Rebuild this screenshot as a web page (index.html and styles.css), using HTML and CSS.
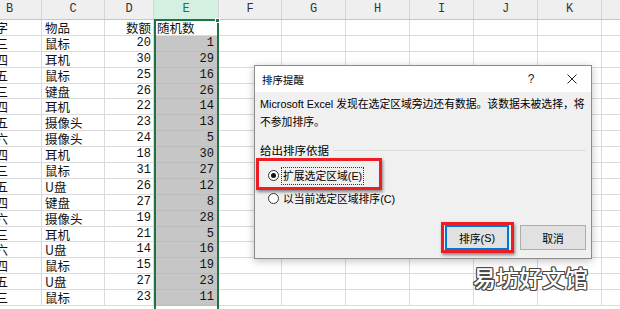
FILE: index.html
```html
<!DOCTYPE html>
<html lang="zh">
<head>
    <meta charset="UTF-8">
    <title>排序提醒</title>
    <link rel="stylesheet" href="styles.css">
</head>
<body>
<div class="page">
    <div class="sheet">
        <div class="hdr">
            <div class="h b">B</div>
            <div class="h cc">C</div>
            <div class="h d">D</div>
            <div class="h e on">E</div>
            <div class="h f">F</div>
            <div class="h g">G</div>
            <div class="h g">H</div>
            <div class="h g">I</div>
            <div class="h g">J</div>
            <div class="h g">K</div>
            <div class="h g"></div>
        </div>
        <div class="row"><div class="c b">名字</div><div class="c cc">物品</div><div class="c d">数额</div><div class="c e top">随机数</div><div class="c f"></div><div class="rest"></div></div>
        <div class="row"><div class="c b">张三</div><div class="c cc">鼠标</div><div class="c d num">20</div><div class="c e num">1</div><div class="c f"></div><div class="rest"></div></div>
        <div class="row"><div class="c b">李四</div><div class="c cc">耳机</div><div class="c d num">30</div><div class="c e num">29</div><div class="c f"></div><div class="rest"></div></div>
        <div class="row"><div class="c b">王五</div><div class="c cc">鼠标</div><div class="c d num">25</div><div class="c e num">16</div><div class="c f"></div><div class="rest"></div></div>
        <div class="row"><div class="c b">张三</div><div class="c cc">键盘</div><div class="c d num">26</div><div class="c e num">26</div><div class="c f"></div><div class="rest"></div></div>
        <div class="row"><div class="c b">李四</div><div class="c cc">耳机</div><div class="c d num">22</div><div class="c e num">14</div><div class="c f"></div><div class="rest"></div></div>
        <div class="row"><div class="c b">王五</div><div class="c cc">摄像头</div><div class="c d num">23</div><div class="c e num">13</div><div class="c f"></div><div class="rest"></div></div>
        <div class="row"><div class="c b">赵六</div><div class="c cc">摄像头</div><div class="c d num">24</div><div class="c e num">5</div><div class="c f"></div><div class="rest"></div></div>
        <div class="row"><div class="c b">李四</div><div class="c cc">耳机</div><div class="c d num">18</div><div class="c e num">30</div><div class="c f"></div><div class="rest"></div></div>
        <div class="row"><div class="c b">张三</div><div class="c cc">鼠标</div><div class="c d num">31</div><div class="c e num">27</div><div class="c f"></div><div class="rest"></div></div>
        <div class="row"><div class="c b">王五</div><div class="c cc">U盘</div><div class="c d num">26</div><div class="c e num">12</div><div class="c f"></div><div class="rest"></div></div>
        <div class="row"><div class="c b">李四</div><div class="c cc">键盘</div><div class="c d num">27</div><div class="c e num">8</div><div class="c f"></div><div class="rest"></div></div>
        <div class="row"><div class="c b">赵六</div><div class="c cc">摄像头</div><div class="c d num">19</div><div class="c e num">28</div><div class="c f"></div><div class="rest"></div></div>
        <div class="row"><div class="c b">张三</div><div class="c cc">耳机</div><div class="c d num">21</div><div class="c e num">5</div><div class="c f"></div><div class="rest"></div></div>
        <div class="row"><div class="c b">赵六</div><div class="c cc">U盘</div><div class="c d num">14</div><div class="c e num">16</div><div class="c f"></div><div class="rest"></div></div>
        <div class="row"><div class="c b">李四</div><div class="c cc">鼠标</div><div class="c d num">15</div><div class="c e num">19</div><div class="c f"></div><div class="rest"></div></div>
        <div class="row"><div class="c b">王五</div><div class="c cc">U盘</div><div class="c d num">27</div><div class="c e num">23</div><div class="c f"></div><div class="rest"></div></div>
        <div class="row"><div class="c b">张三</div><div class="c cc">鼠标</div><div class="c d num">23</div><div class="c e num">11</div><div class="c f"></div><div class="rest"></div></div>
    </div>

    <!-- column E selection frame -->
    <div class="sel"></div>
    <div class="handle"></div>

    <div class="dialog">
        <div class="dlg-title">
            <span class="t">排序提醒</span>
            <span class="q">?</span>
            <svg class="x" width="10" height="10" viewBox="0 0 10 10">
                <path d="M0.5 0.5 L9.5 9.5 M9.5 0.5 L0.5 9.5" stroke="#222" stroke-width="1" fill="none"/>
            </svg>
        </div>
        <p class="msg">Microsoft Excel 发现在选定区域旁边还有数据。该数据未被选择，将<br>不参加排序。</p>
        <div class="grp">给出排序依据</div>
        <div class="hl hl1">
            <span class="radio checked"></span>
            <span class="lbl focus">扩展选定区域(<u>E</u>)</span>
        </div>
        <div class="opt">
            <span class="radio"></span>
            <span class="lbl">以当前选定区域排序(<u>C</u>)</span>
        </div>
        <div class="btns">
            <div class="hl hl2"><div class="btn def">排序(<u>S</u>)</div></div>
            <div class="btn cancel">取消</div>
        </div>
    </div>

    <div class="mark">易坊好文馆</div>
</div>
</body>
</html>
```

FILE: styles.css
```css
* {
    margin: 0;
    padding: 0;
    box-sizing: border-box;
}

body {
    background: white;
    overflow: hidden;
    font-family: "Liberation Sans", "Noto Sans CJK SC", sans-serif;
}

.page {
    position: relative;
    width: 620px;
    height: 309px;
    overflow: hidden;
}

.sheet {
    margin-left: -22px;
    width: 720px;
}

/* column letters */
.hdr {
    display: flex;
    height: 20px;
    background: #efefef;
    border-bottom: 1px solid #c6c6c6;
}

.h {
    flex: none;
    text-align: center;
    border-right: 1px solid #d6d6d6;
    font: 12px/19px "Liberation Mono", monospace;
    color: #333;
}

.h.on {
    background: #d3f0e0;
    color: #217346;
}

.b { width: 64px; }
.cc { width: 63px; }
.d { width: 49px; }
.e { width: 65px; }
.f { width: 63px; }
.g { width: 64px; }

/* cells */
.row {
    display: flex;
    height: 15.9px;
}

.c {
    flex: none;
    height: 100%;
    border-right: 1px solid #dadada;
    border-bottom: 1px solid #dadada;
    padding: 0 3px;
    font: 12.5px/15px "Noto Sans CJK SC", sans-serif;
    color: #111;
    white-space: nowrap;
}

.c.b { padding-left: 5px; }

.c.d { text-align: right; padding-right: 2px; }

.c.e {
    text-align: right;
    padding-right: 4px;
    background: #c6c6c6;
    border-bottom-color: #bcbcbc;
}

.c.e.top {
    text-align: left;
    background: white;
    border-bottom-color: #dadada;
}

.num {
    font: 12px/15px "Liberation Mono", monospace;
}

.rest {
    flex: 1;
    height: 100%;
    border-bottom: 1px solid #dadada;
    background: repeating-linear-gradient(to right, transparent 0 63px, #dadada 63px 64px);
}

/* selection frame over column E */
.sel {
    position: absolute;
    left: 154px;
    top: 19px;
    width: 65px;
    height: 300px;
    border: 2px solid #217346;
}

.handle {
    position: absolute;
    left: 215px;
    top: 18px;
    width: 5px;
    height: 5px;
    background: #217346;
    border: 1px solid white;
}

/* dialog */
.dialog {
    position: absolute;
    left: 254px;
    top: 65px;
    width: 338px;
    height: 194px;
    background: #f0f0f0;
    border: 1px solid #8c8c8c;
    box-shadow: 0 2px 8px rgba(0, 0, 0, 0.25);
    font-size: 10.8px;
    color: #000;
}

.dlg-title {
    display: flex;
    align-items: center;
    height: 26px;
    background: white;
    padding-left: 7px;
    font-size: 10.5px;
}

.dlg-title .t {
    flex: 1;
}

.dlg-title .q {
    width: 8px;
    margin-right: 32px;
    font-size: 12px;
    text-align: center;
    color: #222;
}

.dlg-title .x {
    margin-right: 14px;
}

.msg {
    margin: 3px 5px 0;
    line-height: 18px;
    white-space: nowrap;
}

.grp {
    display: flex;
    align-items: center;
    height: 16px;
    margin: 11px 5px 0;
    font-size: 11.5px;
}

.grp::after {
    content: "";
    flex: 1;
    margin-left: 4px;
    border-top: 1px solid #dcdcdc;
}

.hl {
    border: 3px solid #ee1d23;
    box-shadow: 1px 2px 3px rgba(0, 0, 0, 0.45);
}

.hl1 {
    display: flex;
    align-items: center;
    width: 126px;
    height: 32px;
    margin-left: 1px;
    padding: 3px 0 0 9px;
}

.radio {
    flex: none;
    position: relative;
    width: 11px;
    height: 11px;
    border: 1px solid #333;
    border-radius: 50%;
    background: white;
}

.radio.checked::after {
    content: "";
    position: absolute;
    left: 2px;
    top: 2px;
    width: 5px;
    height: 5px;
    border-radius: 50%;
    background: #111;
}

.lbl {
    margin-left: 4px;
    white-space: nowrap;
}

.lbl u {
    text-decoration: none;
}

.lbl.focus {
    margin-left: 2px;
    padding: 0 1px;
    height: 18px;
    line-height: 16px;
    border: 1px dotted #333;
}

.opt {
    display: flex;
    align-items: center;
    height: 16px;
    margin-left: 13px;
}

.btns {
    display: flex;
    justify-content: flex-end;
    align-items: flex-start;
    gap: 6px;
    margin: 16px 5px 0 0;
}

.hl2 {
    width: 73px;
    height: 31px;
    padding-left: 1px;
}

.btn {
    display: flex;
    justify-content: center;
    align-items: center;
    height: 25px;
    background: #e1e1e1;
    border: 1px solid #adadad;
}

.btn u {
    text-decoration: none;
}

.btn.def {
    width: 64px;
    border: 2px solid #0078d7;
}

.btn.cancel {
    width: 66px;
    margin-top: 3px;
}

/* watermark: white letters with a thin dark outline */
.mark {
    position: absolute;
    left: 473px;
    top: 262px;
    font: 500 23px/30px "Noto Sans CJK SC", sans-serif;
    color: white;
    text-shadow:
        1px 0 0 #4a4a4a, -1px 0 0 #4a4a4a, 0 1px 0 #4a4a4a, 0 -1px 0 #4a4a4a,
        1px 1px 0 #4a4a4a, -1px -1px 0 #4a4a4a, 1px -1px 0 #4a4a4a, -1px 1px 0 #4a4a4a;
}
```
